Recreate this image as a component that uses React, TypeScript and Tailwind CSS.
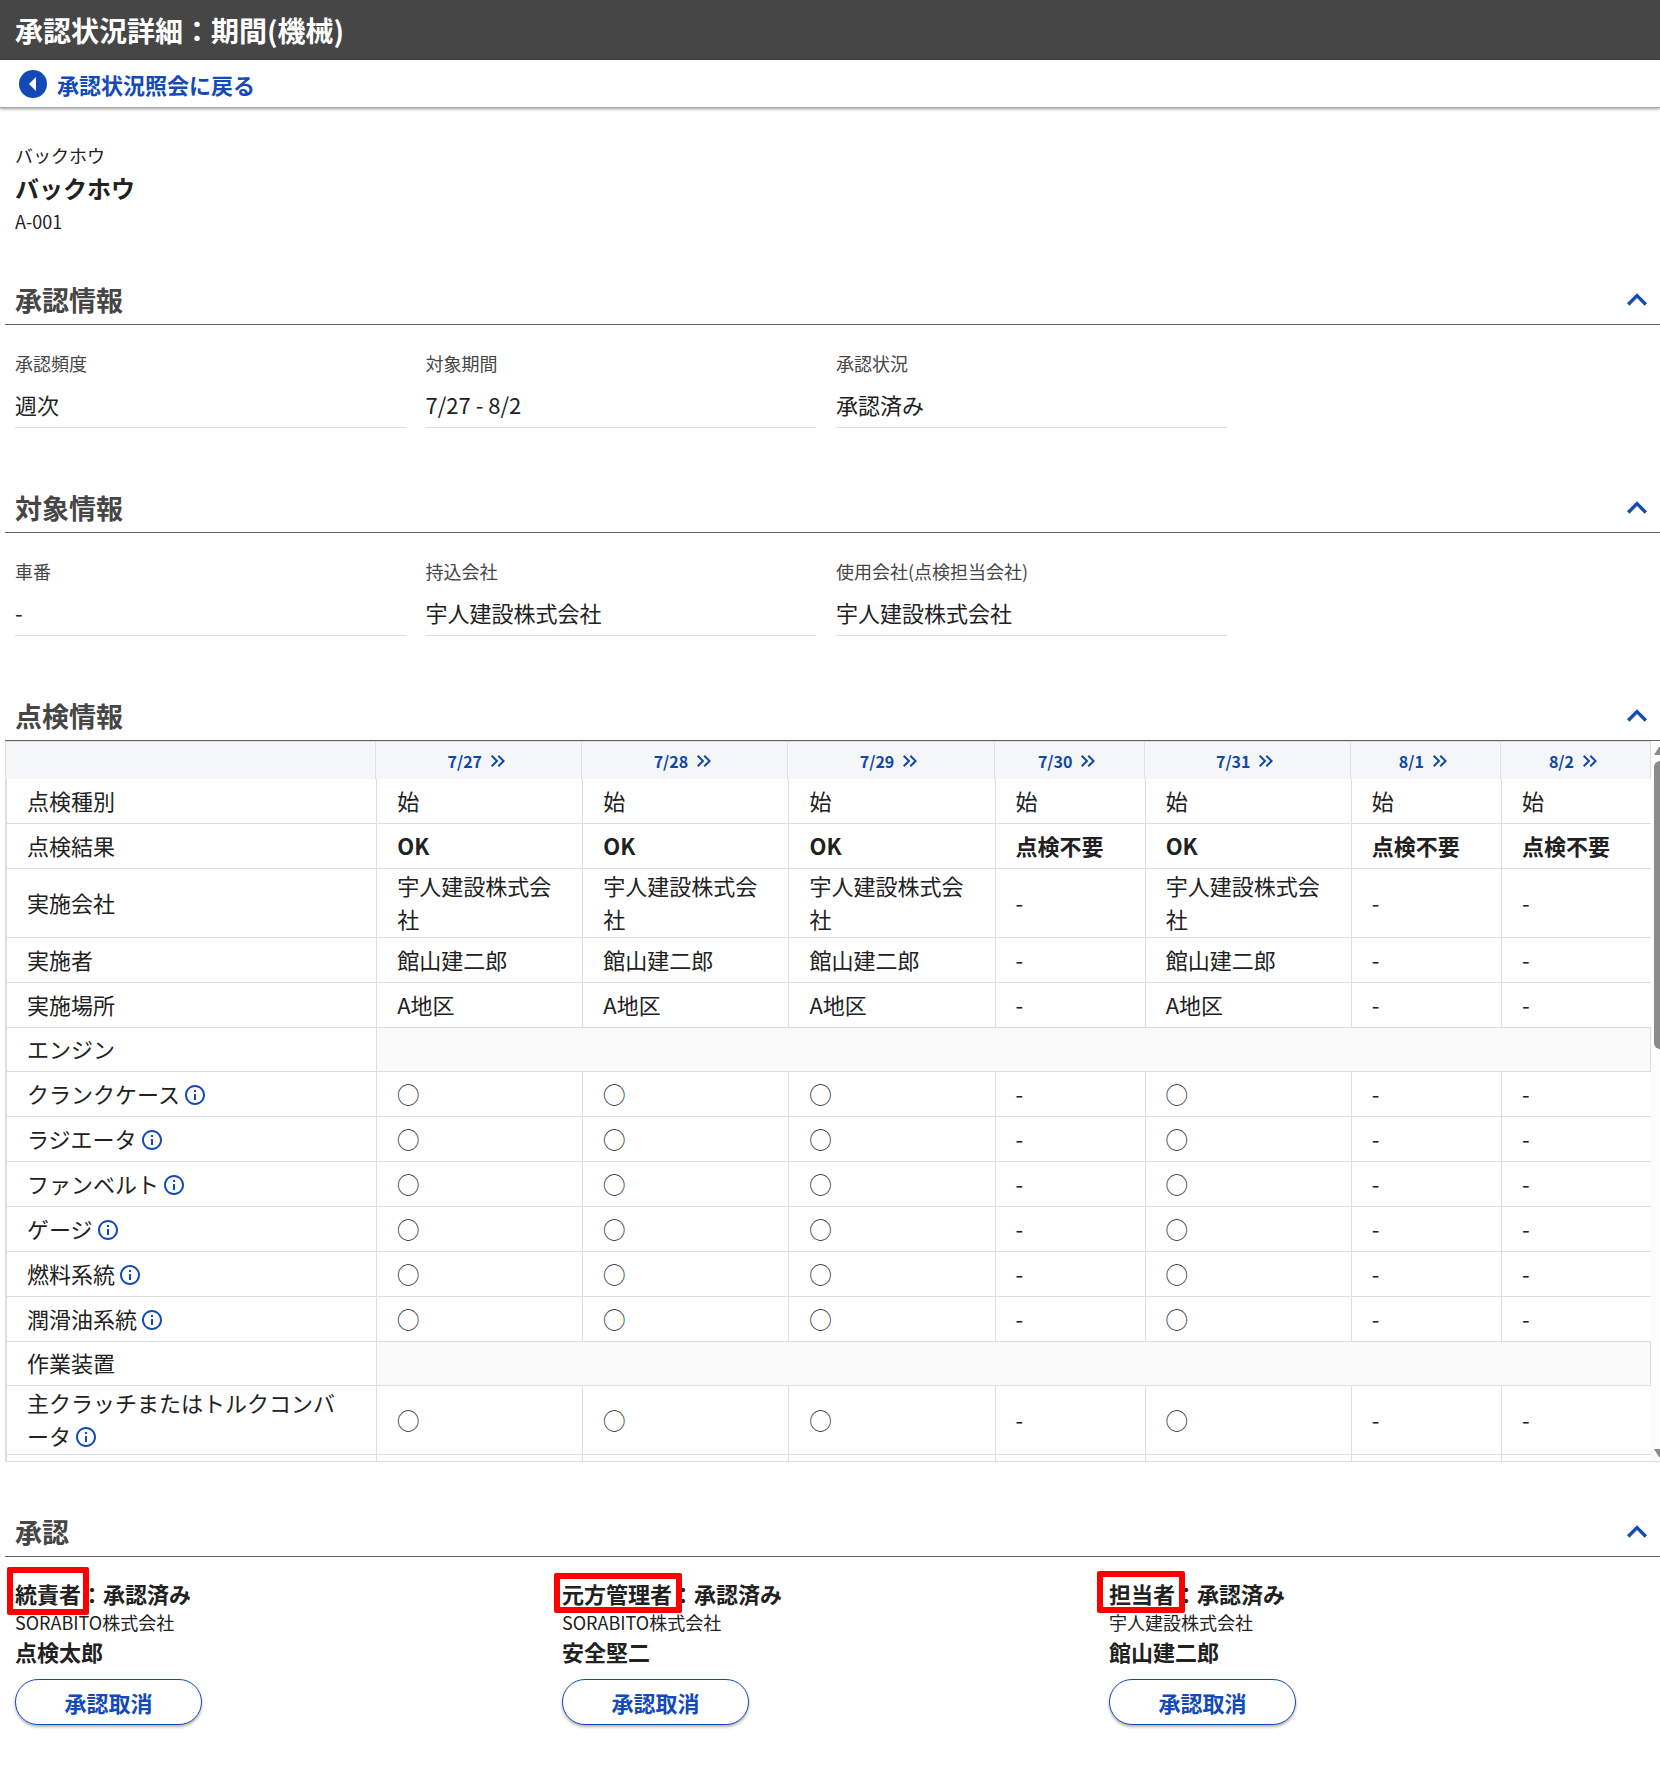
import React from 'react';
import { clsx } from 'clsx';
import { MdInfoOutline, MdKeyboardArrowUp, MdKeyboardDoubleArrowRight } from 'react-icons/md';

interface Field {
  label: string;
  value: string;
}

interface InspectionRow {
  label: string;
  values?: string[];
  info?: boolean;
  bold?: boolean;
}

interface Approval {
  role: string;
  company: string;
  name: string;
  frame: string;
}

const approvalFields: Field[] = [
  { label: '承認頻度', value: '週次' },
  { label: '対象期間', value: '7/27 - 8/2' },
  { label: '承認状況', value: '承認済み' },
];

const targetFields: Field[] = [
  { label: '車番', value: '-' },
  { label: '持込会社', value: '宇人建設株式会社' },
  { label: '使用会社(点検担当会社)', value: '宇人建設株式会社' },
];

const days = ['7/27', '7/28', '7/29', '7/30', '7/31', '8/1', '8/2'];

// 点検不要の日は幅の狭い列になる
const inspected = [true, true, true, false, true, false, false];

const fill = (done: string, none = '-') => inspected.map((ok) => (ok ? done : none));

const rows: InspectionRow[] = [
  { label: '点検種別', values: fill('始', '始') },
  { label: '点検結果', values: fill('OK', '点検不要'), bold: true },
  { label: '実施会社', values: fill('宇人建設株式会社') },
  { label: '実施者', values: fill('館山建二郎') },
  { label: '実施場所', values: fill('A地区') },
  { label: 'エンジン' },
  { label: 'クランクケース', values: fill('◯'), info: true },
  { label: 'ラジエータ', values: fill('◯'), info: true },
  { label: 'ファンベルト', values: fill('◯'), info: true },
  { label: 'ゲージ', values: fill('◯'), info: true },
  { label: '燃料系統', values: fill('◯'), info: true },
  { label: '潤滑油系統', values: fill('◯'), info: true },
  { label: '作業装置' },
  { label: '主クラッチまたはトルクコンバータ', values: fill('◯'), info: true },
  { label: '', values: fill('', '') },
];

const approvals: Approval[] = [
  { role: '統責者', company: 'SORABITO株式会社', name: '点検太郎', frame: '-left-2 -right-2 -top-3 -bottom-2' },
  { role: '元方管理者', company: 'SORABITO株式会社', name: '安全堅二', frame: '-left-2 -right-2.5 -top-1.5 -bottom-1.5' },
  { role: '担当者', company: '宇人建設株式会社', name: '館山建二郎', frame: '-left-3 -right-2.5 -top-2 -bottom-1.5' },
];

const SectionHeader: React.FC<{ title: string }> = ({ title }) => (
  <div className="flex h-[50px] items-center justify-between border-b border-[#666] pl-2.5">
    <h2 className="text-[27px] leading-10 font-bold text-[#464646]">{title}</h2>
    <button type="button" aria-label={`${title}を閉じる`} className="mr-[3px] text-[#134ab7]">
      <MdKeyboardArrowUp size={40} />
    </button>
  </div>
);

const FieldList: React.FC<{ fields: Field[] }> = ({ fields }) => (
  <dl className="grid grid-cols-4 gap-5 pt-6 pr-[23px] pb-[55px] pl-2.5">
    {fields.map((field) => (
      <div key={field.label} className="border-b border-[#dedede]">
        <dt className="text-[18px] leading-7 text-[#464646]">{field.label}</dt>
        <dd className="pt-2 pb-1 text-[22px] leading-[38px]">{field.value}</dd>
      </div>
    ))}
  </dl>
);

const InspectionTable: React.FC = () => (
  <div className="flex h-[721px] border-b border-l border-[#dedede]">
    <div className="min-w-0 flex-1 overflow-auto [scrollbar-width:none]">
      <table className="w-full table-fixed border-separate border-spacing-0 text-[22px] leading-[33px]">
        <colgroup>
          <col className="w-[370px]" />
          {inspected.map((ok, index) => (
            <col key={index} className={ok ? 'w-[206px]' : 'w-[150px]'} />
          ))}
        </colgroup>
        <thead className="text-base leading-6">
          <tr>
            <td className="sticky top-0 h-[38px] border-t border-r border-[#dedede] bg-[#f5f6f8]" />
            {days.map((day) => (
              <th key={day} scope="col" className="sticky top-0 h-[38px] border-t border-r border-[#dedede] bg-[#f5f6f8] p-0">
                <a href="#" className="inline-flex items-center gap-1 align-top font-bold text-[#1048a8]">
                  {day}
                  <MdKeyboardDoubleArrowRight size={24} />
                </a>
              </th>
            ))}
          </tr>
        </thead>
        <tbody>
          {rows.map((row, index) => (
            <tr key={index} className={row.values ? 'h-[45px]' : 'h-11'}>
              <th scope="row" className="border-b border-l border-[#dedede] pt-0 pr-6 pb-0.5 pl-5 text-left font-normal break-all">
                {row.label}
                {row.info && (
                  <button type="button" aria-label="点検項目の説明" className="ml-[3px] align-middle text-[#134ab7]">
                    <MdInfoOutline size={24} className="-mt-1" />
                  </button>
                )}
              </th>
              {row.values ? (
                row.values.map((value, i) => (
                  <td
                    key={i}
                    className={clsx('border-b border-l border-[#dedede] pt-0 pr-6 pb-0.5 pl-5 break-all', row.bold && 'font-bold')}
                  >
                    {value}
                  </td>
                ))
              ) : (
                <td colSpan={days.length} className="border-x border-b border-[#dedede] bg-[#fafafa]" />
              )}
            </tr>
          ))}
        </tbody>
      </table>
    </div>
    <div aria-hidden="true" className="flex w-[9px] shrink-0 flex-col justify-between overflow-hidden bg-[#fcfcfc] pt-1.5 pb-1 pl-[3px]">
      <svg width="14" height="8" viewBox="0 0 14 8" fill="#8b8b8b" className="shrink-0">
        <path d="M5 0h4l5 8H0z" />
      </svg>
      <div className="flex-1 pt-1.5">
        <div className="h-[288px] w-3 rounded-full bg-[#8b8b8b]" />
      </div>
      <svg width="14" height="8" viewBox="0 0 14 8" fill="#8b8b8b" className="shrink-0">
        <path d="M0 0h14L9 8H5z" />
      </svg>
    </div>
  </div>
);

const App: React.FC = () => {
  return (
    <div lang="ja" className="min-h-screen bg-white pb-10 font-['Noto_Sans_CJK_JP',sans-serif] text-[#212121]">
      <header>
        <div className="flex h-[60px] items-center bg-[#464646] px-[15px]">
          <h1 className="text-[28px] leading-10 font-bold text-white">承認状況詳細：期間(機械)</h1>
        </div>
        <nav className="flex h-12 items-center border-b border-[#a6a6a6] px-[19px] shadow-[0_1px_3px_rgba(0,0,0,0.4)]">
          <a href="#" className="flex items-center gap-2.5 text-[22px] leading-8 font-bold text-[#134ab7]">
            <svg width="28" height="28" viewBox="0 0 28 28">
              <circle cx="14" cy="14" r="14" fill="#134ab7" />
              <path d="M17 7v14l-7-7z" fill="#fff" />
            </svg>
            承認状況照会に戻る
          </a>
        </nav>
      </header>

      <main className="pl-[5px]">
        <div className="pt-8 pb-[39px] pl-2.5">
          <p className="text-[18px] leading-[30px]">バックホウ</p>
          <p className="text-[24px] leading-9 font-bold">バックホウ</p>
          <p className="text-[18px] leading-[30px]">A-001</p>
        </div>

        <section>
          <SectionHeader title="承認情報" />
          <FieldList fields={approvalFields} />
        </section>

        <section>
          <SectionHeader title="対象情報" />
          <FieldList fields={targetFields} />
        </section>

        <section>
          <SectionHeader title="点検情報" />
          <InspectionTable />
        </section>

        <section className="pt-[45px]">
          <SectionHeader title="承認" />
          <div className="grid grid-cols-3 pt-[22px] pr-1 pl-2.5">
            {approvals.map((approval) => (
              <div key={approval.role}>
                <p className="text-[22px] leading-7 font-bold">
                  <span className="relative inline-block">
                    {approval.role}
                    <span className={clsx('absolute rounded-xs border-6 border-[#f00]', approval.frame)} />
                  </span>
                  ：承認済み
                </p>
                <p className="text-[18px] leading-[30px]">{approval.company}</p>
                <p className="text-[22px] leading-7 font-bold">{approval.name}</p>
                <button
                  type="button"
                  className="mt-3.5 h-[46px] w-[187px] rounded-full border border-[#134ab7] bg-white text-[22px] leading-8 font-bold text-[#134ab7] shadow-[0_2px_3px_rgba(0,0,0,0.3)]"
                >
                  承認取消
                </button>
              </div>
            ))}
          </div>
        </section>
      </main>
    </div>
  );
};

export default App;
